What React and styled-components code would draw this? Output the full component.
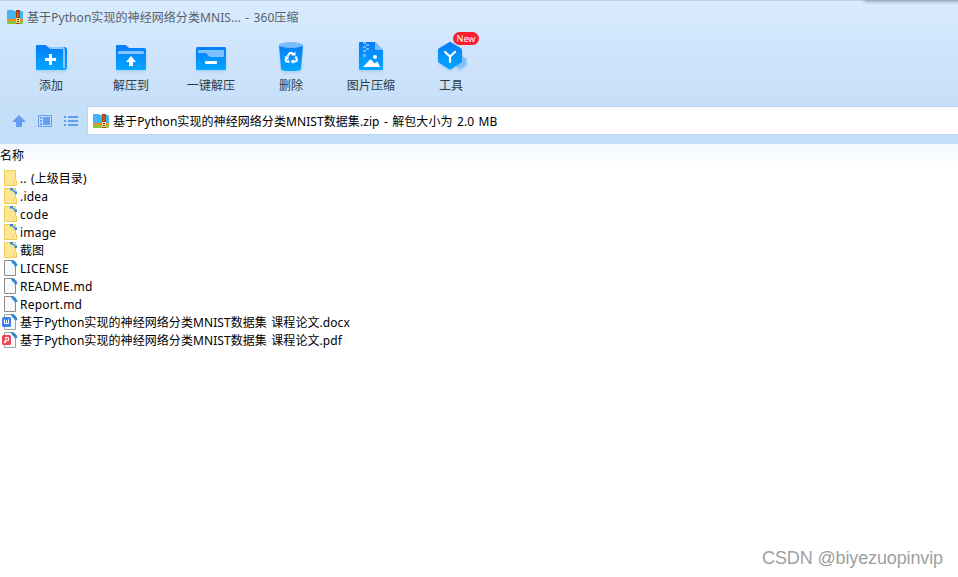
// App.jsx
import styled, { createGlobalStyle } from "styled-components";

const GlobalStyle = createGlobalStyle`
    * {
        box-sizing: border-box;
    }

    body {
        margin: 0;
        background: #fff;
        color: #000;
        font-family: "Noto Sans", "Noto Sans CJK SC", sans-serif;
        font-size: 12px;
        overflow: hidden;
    }

    svg {
        display: block;
        flex: none;
    }
`;

const Window = styled.div`
    position: relative;
    height: 577px;
    display: flex;
    flex-direction: column;
    overflow: hidden;
`;

const Header = styled.header`
    height: 144px;
    border-top: 1px solid #b9d5f1;
    background: linear-gradient(#d8ebff 0, #cfe4fc 55px, #c6dff8 105px, #c3defa 143px);
`;

const TitleBar = styled.div`
    height: 31px;
    padding-left: 7px;
    display: flex;
    align-items: center;
    gap: 4px;
    color: #5b6168;
`;

const Label = styled.span`
    display: block;
    padding-top: 2px;
    line-height: 18px;
    white-space: pre;
    word-spacing: 1.2px;
    letter-spacing: ${({ $spacing = 0.07 }) => $spacing}px;
`;

const Toolbar = styled.nav`
    height: 74px;
    padding-left: 11px;
    display: flex;
`;

const Tool = styled.div`
    width: 80px;
    padding-top: 6px;
    position: relative;
    display: flex;
    flex-direction: column;
    align-items: center;
    gap: 1px;
    color: #333a42;

    svg {
        filter: drop-shadow(0 2px 1px rgba(70, 140, 220, 0.2));
    }
`;

const Badge = styled.span`
    position: absolute;
    top: 0;
    left: 42px;
    width: 26px;
    height: 13px;
    border-radius: 7px;
    background: #fb1d2d;
    color: #fff;
    font-size: 9px;
    line-height: 13px;
    text-align: center;
`;

const AddressRow = styled.div`
    height: 29px;
    display: flex;
    align-items: center;
`;

const NavButtons = styled.div`
    width: 87px;
    padding-left: 12px;
    display: flex;
    gap: 12px;
`;

const AddressBox = styled.div`
    flex: 1;
    height: 29px;
    padding-left: 5px;
    border: 1px solid #b9d5f1;
    border-right: 0;
    background: #fff;
    display: flex;
    align-items: center;
    gap: 4px;
`;

const ColumnHeader = styled.div`
    height: 25px;
    padding-top: 1px;
    background: linear-gradient(#f3f8ff, #fff);
`;

const FileRow = styled.div`
    height: 18px;
    padding-left: 2px;
    display: flex;
    align-items: center;
    gap: 2px;
`;

const Corner = styled.div`
    position: absolute;
    top: 0;
    right: 0;
    width: 98px;
    height: 5px;
    background: linear-gradient(#8d9fb2 0, #a9bccf 1px, rgba(190, 211, 231, 0.7) 3px, transparent);
    mask-image: linear-gradient(90deg, transparent, #000 8px);
`;

const Watermark = styled.div`
    position: absolute;
    right: 15px;
    bottom: 8px;
    color: #a0a0a0;
    font-family: "Liberation Sans", sans-serif;
    font-size: 18px;
    line-height: 22px;
    letter-spacing: -0.13px;
`;

const ZipIcon = () => (
    <svg width="16" height="16" viewBox="0 0 16 16">
        <path d="M0 2q0-1 1-1h5l1 1h8q1 0 1 1v8H0z" fill="#43b5f5" />
        <path d="M0 10h16v2H0z" fill="#ff8a13" />
        <path d="M0 12h16v2q0 1-1 1H1q-1 0-1-1z" fill="#8bc53f" />
        <path d="M9 1h4v14H9z" fill="#a9440c" />
        <path d="M10 3h1v1h-1zm1 1h1v1h-1zm-1 1h1v1h-1zm1 1h1v1h-1zm-1 1h1v1h-1z" fill="#d9782f" />
        <path d="M9 9h4v5H9z" fill="#f9d98a" />
        <path d="M10 10h2v1h-2zm0 2h2v1h-2z" fill="#70400f" />
    </svg>
);

const Blue = ({ id }) => (
    <linearGradient id={id} x1="0" y1="0" x2="0" y2="1">
        <stop offset="0" stopColor="#067cf9" />
        <stop offset="1" stopColor="#02a8ff" />
    </linearGradient>
);

const AddIcon = () => (
    <svg width="32" height="36" viewBox="0 0 32 36">
        <defs><Blue id="add" /></defs>
        <path d="M13 9h16q3 0 3 3v17q0 3-3 3H13z" fill="url(#add)" />
        <path d="M12 9h15q3 0 3 3v18h-2V12q0-1-1-1H12z" fill="#8bc8ff" />
        <path d="M2 7h8q1 0 2 1l2 2q1 1 2 1h10q2 0 2 2v19H2q-1 0-1-1V8q0-1 1-1z" fill="url(#add)" />
        <path d="M14 16h3v4h4v3h-4v4h-3v-4h-4v-3h4z" fill="#fff" />
    </svg>
);

const ExtractIcon = () => (
    <svg width="32" height="36" viewBox="0 0 32 36">
        <defs><Blue id="extract" /></defs>
        <path d="M2 7h8q1 0 2 1l2 2h15q2 0 2 2v19q0 1-1 1H2q-1 0-1-1V8q0-1 1-1z" fill="url(#extract)" />
        <path d="M4 13h24q1 0 1 2v1H3v-1q0-2 1-2z" fill="#82c4ff" />
        <path d="M16 18l5 6h-3v4h-4v-4h-3z" fill="#fff" />
    </svg>
);

const OneClickIcon = () => (
    <svg width="32" height="36" viewBox="0 0 32 36">
        <defs><Blue id="oneclick" /></defs>
        <rect x="1" y="9" width="30" height="23" rx="1.5" fill="url(#oneclick)" />
        <path d="M3 15v-2q0-1 1-1h24q1 0 1 1v6H16q-2 0-3-2l-1-1q-1-1-2-1z" fill="#7dc2ff" />
        <rect x="10" y="23" width="12" height="3" rx="1" fill="#fff" />
    </svg>
);

const DeleteIcon = () => (
    <svg width="32" height="36" viewBox="0 0 32 36">
        <defs><Blue id="trash" /></defs>
        <path d="M4 7h24l-2 24q0 2-10 2T6 31z" fill="url(#trash)" />
        <ellipse cx="16" cy="7" rx="12" ry="3" fill="#79bcfb" />
        <g fill="none" stroke="#fff" strokeWidth="2.2">
            <path d="M12.5 18.5l2-3q1.5-1.4 3 0l1 1.5" />
            <path d="M20.5 18.5l1.2 2.5q.6 2.5-2 2.5h-2.5" />
            <path d="M14.5 23.7h-2q-2.5-.4-1.6-2.8l.6-1" />
        </g>
        <path d="M16.5 17.5h4v-4zM18.5 21.2v4.8l-3-2.4zM9 18.5h4.5v3.8z" fill="#fff" />
    </svg>
);

const ImageIcon = () => (
    <svg width="32" height="36" viewBox="0 0 32 36">
        <defs><Blue id="image" /></defs>
        <path d="M5 4h15l8 8v19q0 1-1 1H5q-1 0-1-1V5q0-1 1-1z" fill="url(#image)" />
        <path d="M20 4l8 8h-8z" fill="#79bcfb" />
        <path d="M8 4h3v2H8zm3 2h3v2h-3zM8 8h3v2H8zm3 2h3v2h-3zm-3 2h3v2H8z" fill="#70baff" />
        <circle cx="9.5" cy="17.5" r="1.7" fill="#70baff" />
        <circle cx="20" cy="19" r="2" fill="#fff" />
        <path d="M8 29l6.5-7q1-1 2 0l3 3.5 1.5-1.3q1-.8 2 .3l2 4.5z" fill="#fff" />
    </svg>
);

const ToolsIcon = () => (
    <svg width="32" height="36" viewBox="0 0 32 36">
        <defs><Blue id="tools" /></defs>
        <path d="M25 17l6.5 3.5v6.5l-6.5 4-6-4z" fill="#82c0fb" />
        <path d="M15.5 4L26 10.3q1 .6 1 1.7v11q0 1-1 1.7L16 31.2q-1 .6-2 0L4 24.7Q3 24 3 23V12q0-1.1 1-1.7L14.5 4q.5-.4 1 0z" fill="url(#tools)" />
        <path d="M10 14l5 4.5 5-4.5M15 18.5V24" fill="none" stroke="#fff" strokeWidth="2.2" strokeLinecap="round" />
    </svg>
);

const UpIcon = () => (
    <svg width="14" height="14" viewBox="0 0 14 14">
        <path d="M7 1l7 7h-4v5H4V8H0z" fill="#659ef0" />
    </svg>
);

const PaneIcon = () => (
    <svg width="14" height="14" viewBox="0 0 14 14">
        <path d="M.5 1.5h13v11H.5z" fill="none" stroke="#659ef0" />
        <path d="M2 3h2v2H2zm0 3h2v2H2zm0 3h2v2H2zM5 3h7v8H5z" fill="#659ef0" />
    </svg>
);

const ListIcon = () => (
    <svg width="14" height="14" viewBox="0 0 14 14">
        <path d="M0 2h2v2H0zm4 0h10v2H4zM0 6h2v2H0zm4 0h10v2H4zM0 10h2v2H0zm4 0h10v2H4z" fill="#659ef0" />
    </svg>
);

const BlueArc = () => (
    <path d="M8.5 0h2.5q3.5 1.500 4.500 5.500l-1.500 1-1.500-.5q0-2-2-2.500z" fill="#3588cb" />
);

const FolderIcon = ({ marked }) => (
    <svg width="16" height="16" viewBox="0 0 16 16">
        <path d="M2.500.5h11v9l1 1v5h-12z" fill="#fde795" stroke="#efcd54" />
        <path d="M11.500 15v-4l2-1.500" fill="none" stroke="#f2d567" />
        {marked && (
            <>
                <path d="M8 0h3v2.500H8zM12.500 3.500h2.500V6h-2.500z" fill="#3588cb" />
                <path d="M10.500 2h2.500v2h-2.500z" fill="#69a7d4" />
            </>
        )}
    </svg>
);

const PageIcon = () => (
    <svg width="16" height="16" viewBox="0 0 16 16">
        <path d="M2.500.5h7l4 4v11h-11z" fill="#f8f9fa" stroke="#8c8c8c" />
        <BlueArc />
    </svg>
);

const WordIcon = () => (
    <svg width="16" height="16" viewBox="0 0 16 16">
        <path d="M2.500.5h8l3 4v11h-11z" fill="#f8f9fa" stroke="#a3a3a3" />
        <BlueArc />
        <rect y="3" width="9" height="10" rx="1.500" fill="#3f82ed" />
        <path d="M2.500 5.500v4h4v-4M4.500 6v3.500" fill="none" stroke="#fff" />
    </svg>
);

const PdfIcon = () => (
    <svg width="16" height="16" viewBox="0 0 16 16">
        <path d="M2.500.5h8l3 4v11h-11z" fill="#f8f9fa" stroke="#a3a3a3" />
        <BlueArc />
        <rect y="3" width="9" height="10" rx="1.500" fill="#ee4552" />
        <path d="M3 5.500h3.500v3H4.200q-2 0-2.200 2h2V6" fill="none" stroke="#fff" />
    </svg>
);

const tools = [
    { label: "添加", Icon: AddIcon },
    { label: "解压到", Icon: ExtractIcon },
    { label: "一键解压", Icon: OneClickIcon },
    { label: "删除", Icon: DeleteIcon },
    { label: "图片压缩", Icon: ImageIcon },
    { label: "工具", Icon: ToolsIcon, badge: "New" },
];

const files = [
    { name: ".. (上级目录)", icon: <FolderIcon /> },
    { name: ".idea", icon: <FolderIcon marked />, spacing: 0.2 },
    { name: "code", icon: <FolderIcon marked />, spacing: 0.35 },
    { name: "image", icon: <FolderIcon marked />, spacing: 0.2 },
    { name: "截图", icon: <FolderIcon marked /> },
    { name: "LICENSE", icon: <PageIcon />, spacing: 0.3 },
    { name: "README.md", icon: <PageIcon />, spacing: 0.3 },
    { name: "Report.md", icon: <PageIcon />, spacing: 0.25 },
    { name: "基于Python实现的神经网络分类MNIST数据集 课程论文.docx", icon: <WordIcon /> },
    { name: "基于Python实现的神经网络分类MNIST数据集 课程论文.pdf", icon: <PdfIcon /> },
];

export default function App() {
    return (
        <>
            <GlobalStyle />
            <Window>
                <Header>
                    <TitleBar>
                        <ZipIcon />
                        <Label>基于Python实现的神经网络分类MNIS... - 360压缩</Label>
                    </TitleBar>

                    <Toolbar>
                        {tools.map(({ label, Icon, badge }) => (
                            <Tool key={label}>
                                <Icon />
                                <Label>{label}</Label>
                                {badge && <Badge>{badge}</Badge>}
                            </Tool>
                        ))}
                    </Toolbar>

                    <AddressRow>
                        <NavButtons>
                            <UpIcon />
                            <PaneIcon />
                            <ListIcon />
                        </NavButtons>
                        <AddressBox>
                            <ZipIcon />
                            <Label>基于Python实现的神经网络分类MNIST数据集.zip - 解包大小为 2.0 MB</Label>
                        </AddressBox>
                    </AddressRow>
                </Header>

                <ColumnHeader>
                    <Label>名称</Label>
                </ColumnHeader>

                <main>
                    {files.map(({ name, icon, spacing }) => (
                        <FileRow key={name}>
                            {icon}
                            <Label $spacing={spacing}>{name}</Label>
                        </FileRow>
                    ))}
                </main>

                <Corner />
                <Watermark>CSDN @biyezuopinvip</Watermark>
            </Window>
        </>
    );
}
